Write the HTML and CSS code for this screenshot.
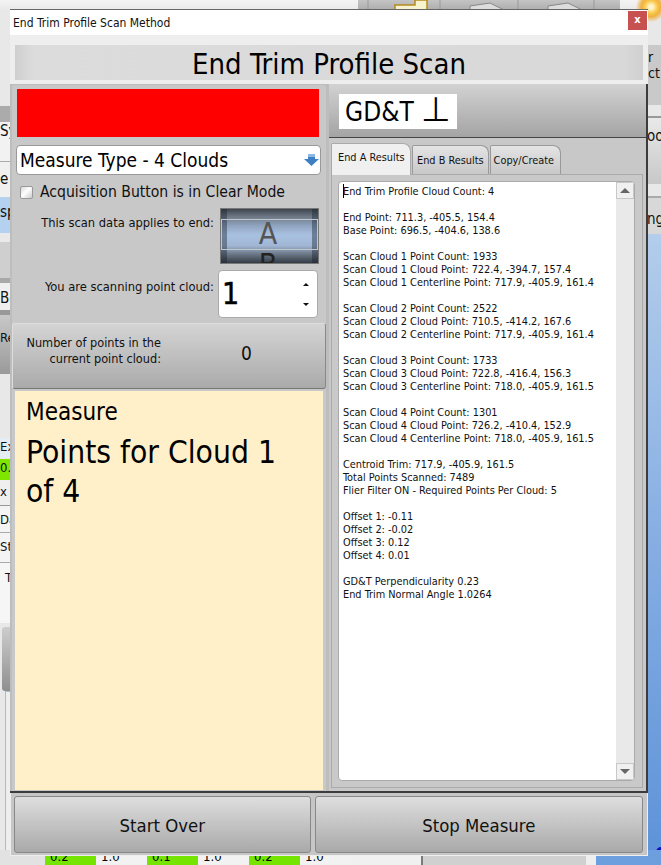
FILE: index.html
```html
<!DOCTYPE html>
<html lang="en">
<head>
<meta charset="utf-8">
<title>End Trim Profile Scan Method</title>
<link rel="stylesheet" href="styles.css">
</head>
<body>
<div class="desk">
  <div class="bg bg-top"></div>
  <div class="bg bg-toolbar"></div>
  <svg class="bg bg-icons" width="262" height="10" viewBox="0 0 262 10"><path d="M37 10V5h20V0h12v10z" fill="#f7f3cf" stroke="#b78a1c" stroke-width="1.5"/><path d="M112 10V6l20-3 14 7M190 10V6l20-3 14 7" fill="#ddd" stroke="#888"/><path d="M10 0v10M82 0v10M160 0v10M236 0v10" stroke="#999"/></svg>
  <div class="bg bg-star"></div>
  <div class="bg bg-blue"></div>
  <div class="bg bg-r1 frag"><span>r</span><span>ct</span></div>
  <div class="bg bg-r2 frag">oo</div>
  <div class="bg bg-r3 frag">ng</div>
  <svg class="bg bg-dots" width="6" height="18" viewBox="0 0 6 18"><circle cx="6" cy="5" r="5" fill="#1010c0"/><path d="M6 13v5H1z" fill="#e01010"/></svg>
  <div class="bg bg-l bl1"></div>
  <div class="bg bg-l bl2 frag">Sy</div>
  <div class="bg bg-l bl3 frag">e</div>
  <div class="bg bg-l bl4 frag">sp</div>
  <div class="bg bg-l bl5"></div>
  <div class="bg bg-l bl6 frag">Be</div>
  <div class="bg bg-l bl7 frag small">Re</div>
  <div class="bg bg-l bl8 frag small">Ext</div>
  <div class="bg bg-l bl9 frag small">0.</div>
  <div class="bg bg-l bl10 frag small">x</div>
  <div class="bg bg-l bl11 frag small">Da</div>
  <div class="bg bg-l bl12 frag small">St</div>
  <div class="bg bg-l bl13 frag small">T</div>
  <div class="bg bg-l bl14"></div>
  <div class="bg bg-l bl15"></div>
  <div class="bg bg-bottom">
    <span class="cell g">0.2</span><span class="cell">1.0</span>
    <span class="cell g">0.1</span><span class="cell">1.0</span>
    <span class="cell g">0.2</span><span class="cell">1.0</span>
    <span class="rest"></span>
  </div>

  <main class="window">
    <header class="titlebar">
      <span class="title-text">End Trim Profile Scan Method</span>
      <span class="close">x</span>
    </header>
    <div class="headband"><h1 class="heading">End Trim Profile Scan</h1></div>

    <div class="panels">
      <section class="left">
        <div class="status"></div>
        <div class="combo">
          <span>Measure Type - 4 Clouds</span>
          <svg class="combo-arrow" width="15" height="14" viewBox="0 0 15 14"><path d="M4 1h7v5h4l-7.500 7L0 6h4z" fill="#3f7fc4"/><path d="M4 1h7v3H4z" fill="#8fb8e4"/></svg>
        </div>
        <label class="check"><span class="box"></span><span>Acquisition Button is in Clear Mode</span></label>
        <div class="field drum-row">
          <span class="field-label">This scan data applies to end:</span>
          <div class="drum"><span class="drum-a">A</span><span class="drum-b">B</span><div class="drum-window"></div></div>
        </div>
        <div class="field spin-row">
          <span class="field-label">You are scanning point cloud:</span>
          <div class="spin"><span class="spin-val">1</span><span class="spin-arrows"><i class="up"></i><i class="down"></i></span></div>
        </div>
        <div class="points">
          <span class="points-label">Number of points in the<br>current point cloud:</span>
          <span class="points-val">0</span>
        </div>
        <div class="prompt">
          <div class="prompt-small">Measure</div>
          <div class="prompt-big">Points for Cloud 1<br>of 4</div>
        </div>
      </section>

      <section class="right">
        <div class="gdt-bar"><div class="gdt">GD&amp;T <span class="perp">⊥</span></div></div>
        <div class="tabarea">
          <div class="tabs">
            <span class="tab active">End A Results</span>
            <span class="tab">End B Results</span>
            <span class="tab tab-last">Copy/Create</span>
          </div>
          <div class="page">
            <div class="results">
              <div class="result-text"><span class="caret"></span>End Trim Profile Cloud Count: 4<br>
<br>
End Point: 711.3, -405.5, 154.4<br>
Base Point: 696.5, -404.6, 138.6<br>
<br>
Scan Cloud 1 Point Count: 1933<br>
Scan Cloud 1 Cloud Point: 722.4, -394.7, 157.4<br>
Scan Cloud 1 Centerline Point: 717.9, -405.9, 161.4<br>
<br>
Scan Cloud 2 Point Count: 2522<br>
Scan Cloud 2 Cloud Point: 710.5, -414.2, 167.6<br>
Scan Cloud 2 Centerline Point: 717.9, -405.9, 161.4<br>
<br>
Scan Cloud 3 Point Count: 1733<br>
Scan Cloud 3 Cloud Point: 722.8, -416.4, 156.3<br>
Scan Cloud 3 Centerline Point: 718.0, -405.9, 161.5<br>
<br>
Scan Cloud 4 Point Count: 1301<br>
Scan Cloud 4 Cloud Point: 726.2, -410.4, 152.9<br>
Scan Cloud 4 Centerline Point: 718.0, -405.9, 161.5<br>
<br>
Centroid Trim: 717.9, -405.9, 161.5<br>
Total Points Scanned: 7489<br>
Flier Filter ON - Required Points Per Cloud: 5<br>
<br>
Offset 1: -0.11<br>
Offset 2: -0.02<br>
Offset 3: 0.12<br>
Offset 4: 0.01<br>
<br>
GD&amp;T Perpendicularity 0.23<br>
End Trim Normal Angle 1.0264</div>
              <div class="scrollbar">
                <span class="sb-btn"><i class="sb-up"></i></span>
                <span class="sb-btn"><i class="sb-down"></i></span>
              </div>
            </div>
          </div>
        </div>
      </section>
    </div>

    <footer class="actions">
      <button class="btn btn-left">Start Over</button>
      <button class="btn btn-right">Stop Measure</button>
    </footer>
  </main>
</div>
</body>
</html>
```
FILE: styles.css
```css
* { box-sizing: border-box; }
html, body { margin: 0; padding: 0; }
body {
  width: 661px;
  height: 865px;
  overflow: hidden;
  font-family: "DejaVu Sans", "Liberation Sans", sans-serif;
  font-stretch: condensed;
  color: #000;
}
.desk { position: relative; width: 661px; height: 865px; overflow: hidden; background: #e8e8e8; }

/* desktop fragments behind the dialog */
.bg { position: absolute; }
.bg-top { left: 0; top: 0; width: 661px; height: 10px; background: linear-gradient(#f3f3f3, #e9e9e9); }
.bg-toolbar { left: 358px; top: 0; width: 262px; height: 10px; background: linear-gradient(#c4c4c4, #adadad); }
.bg-icons { left: 358px; top: 0; }
.bg-star { left: 636px; top: -8px; width: 30px; height: 30px; border-radius: 50%; background: radial-gradient(circle, #fff3c8 0 10%, #f9c84a 30%, #f0b040 45%, rgba(240,176,64,0) 72%); }
.bg-blue { left: 645px; top: 234px; width: 16px; height: 631px; background: linear-gradient(#b3cdeb, #85ade3 50%, #5d92d8); }
.frag { font-size: 15px; line-height: 18px; color: #111; overflow: hidden; }
.bg-r1 { left: 640px; top: 45px; width: 21px; height: 60px; background: #c9c9c9; display: flex; flex-direction: column; padding-left: 8px; font-size: 14px; line-height: 16px; padding-top: 4px; }
.bg-r2 { left: 640px; top: 116px; width: 21px; height: 68px; background: linear-gradient(#e9e9e9, #c8c8c8); border-top: 2px solid #999; padding: 9px 0 0 7px; }
.bg-r3 { left: 640px; top: 196px; width: 21px; height: 38px; background: #d8d8d8; border-top: 2px solid #aaa; padding: 12px 0 0 7px; }
.bg-dots { left: 655px; top: 847px; }
.bg-l { left: 0; width: 14px; }
.small { font-size: 13px; }
.bl1 { top: 106px; height: 16px; background: #ababab; }
.bl2 { top: 122px; height: 40px; background: #f2f2f2; border-bottom: 1px solid #aaa; }
.bl3 { top: 162px; height: 35px; background: #f0f0f0; padding-top: 8px; }
.bl4 { top: 197px; height: 36px; background: #b4d2ef; padding-top: 6px; }
.bl5 { top: 233px; height: 45px; background: #cfcfcf; border-top: 9px solid #e9e9e9; }
.bl6 { top: 278px; height: 32px; background: #efefef; border-top: 5px solid #a8a8a8; padding-top: 6px; }
.bl7 { top: 310px; height: 64px; background: linear-gradient(#c8c8c8, #9a9a9a); border-top: 5px solid #999; padding-top: 14px; }
.bl8 { top: 438px; height: 20px; background: #e4ecf4; }
.bl9 { top: 459px; height: 21px; background: #7fe600; }
.bl10 { top: 480px; height: 26px; background: #efefef; border-bottom: 1px solid #999; padding-top: 3px; }
.bl11 { top: 506px; height: 27px; background: #f4f4f4; border-bottom: 1px solid #aaa; padding-top: 5px; }
.bl12 { top: 533px; height: 30px; background: #f4f4f4; border-bottom: 1px solid #aaa; padding-top: 5px; }
.bl13 { top: 563px; height: 60px; background: #f6f6f6; padding: 6px 0 0 5px; }
.bl14 { top: 627px; height: 64px; background: linear-gradient(#cdcdcd, #8f8f8f); left: 2px; border-radius: 3px 0 0 3px; }
.bl15 { top: 691px; height: 174px; background: #eee; left: 5px; border-left: 1px solid #a8bdd2; border-top: 1px solid #a8bdd2; }
.bg-bottom { left: 0; top: 850px; width: 661px; height: 15px; background: #e2e2e2; display: flex; padding-left: 45px; font-size: 13px; line-height: 13px; overflow: hidden; }
.cell { width: 51px; padding-left: 5px; overflow: hidden; }
.cell.g { background: #74e400; }
.cell:nth-child(2n) { background: #f2f2f2; }
.rest {
  flex: 1;
  background: linear-gradient(90deg, #f0f0f0 0 70px, #7a7a7a 70px 72px, #d0d0d0 72px 235px, #eee 235px 245px, #6d9edd 245px);
}

/* dialog */
.window {
  position: absolute; left: 10px; top: 9px;
  width: 638px; height: 846px;
  background: #efefef;
  border-top: 1px solid #666;
  display: flex; flex-direction: column;
}
.titlebar {
  height: 25px; flex: none; background: #fff;
  display: flex; align-items: center; justify-content: space-between;
  padding: 0 1px 0 3px;
}
.title-text { font-size: 12px; color: #111; }
.close {
  width: 19px; height: 19px; margin-bottom: 4px; background: #c75050; color: #fff;
  font-size: 11px; font-weight: bold; line-height: 17px; text-align: center;
}
.headband { height: 49px; flex: none; padding: 10px 5px 4px; background: #eee; }
.heading {
  margin: 0; height: 35px;
  background: linear-gradient(90deg, #cfcfcf, #dcdcdc 3%, #d8d8d8 97%, #d0d0d0);
  font-size: 29px; font-weight: normal; line-height: 38px; text-align: center;
}
.panels { display: flex; flex: none; height: 709px; background: #bdbdbd; border-bottom: 2px solid #3c3c3c; }
.left {
  width: 316px; flex: none; margin-left: 1px; background: #c8c8c8;
  border: 1px solid #bdbdbd; border-bottom: 0; border-radius: 3px 3px 0 0;
  padding: 4px 0 0;
  display: flex; flex-direction: column;
}
.status { height: 48px; margin: 0 7px 0 5px; background: #f00; flex: none; }
.combo {
  height: 30px; flex: none; margin: 8px 5px 0 4px;
  background: #fff; border: 1px solid #999; border-radius: 4px;
  display: flex; align-items: center; justify-content: space-between;
  padding: 0 1px 0 3px;
  font-size: 19px;
}
.combo-arrow { flex: none; }
.check { display: flex; align-items: center; height: 18px; margin: 8px 0 0 8px; font-size: 15.600px; gap: 7px; color: #111; }
.box { width: 13px; height: 13px; flex: none; border: 1px solid #999; border-radius: 2px; background: linear-gradient(135deg, #d8d8d8, #fff 45%, #ccc); }
.field { display: flex; justify-content: flex-end; align-items: flex-start; flex: none; }
.field-label { font-size: 12.800px; color: #111; }
.drum-row { margin: 7px 7px 0 0; gap: 6px; height: 56px; }
.drum-row .field-label { padding-top: 7px; }
.drum {
  width: 99px; height: 56px; position: relative; overflow: hidden;
  border: 1px solid #777;
  background:
    linear-gradient(90deg, rgba(20,30,45,.4) 0 6px, transparent 6px 91px, rgba(20,30,45,.4) 91px),
    linear-gradient(#3d444d, #6d7785 14%, #8ea2bd 30%, #a9c1e1 48%, #a0b6d4 68%, #6a7684 84%, #333b45);
}
.drum-window { position: absolute; left: 0; right: 0; top: 10px; height: 31px; border: 1px solid #c0c6cc; }
.drum-a { position: absolute; left: 0; right: 3px; top: 10px; font-size: 30px; line-height: 30px; text-align: center; color: #555; }
.drum-b { position: absolute; left: 0; right: 3px; top: 41px; font-size: 30px; line-height: 30px; text-align: center; color: #222; }
.spin-row { margin: 6px 8px 0 0; gap: 4px; height: 48px; }
.spin-row .field-label { padding-top: 9px; }
.spin {
  width: 100px; height: 48px; background: #fff;
  border: 1px solid #aaa; border-radius: 4px;
  display: flex; align-items: center; justify-content: space-between;
  padding: 0 8px 0 3px;
}
.spin-val { font-size: 30px; line-height: 40px; -webkit-text-stroke: 0.5px #000; }
.spin-arrows { display: flex; flex-direction: column; gap: 17px; }
.spin-arrows i { display: block; width: 0; height: 0; border-left: 3px solid transparent; border-right: 3px solid transparent; }
.up { border-bottom: 3px solid #111; }
.down { border-top: 3px solid #111; }
.points {
  height: 66px; flex: none; margin: 5px 0 0 0; padding-bottom: 10px;
  background: linear-gradient(#d4d4d4, #aaa);
  border: 1px solid #ddd; border-bottom-color: #777; border-right-color: #888; border-radius: 3px;
  display: flex; align-items: center; font-size: 12.600px; color: #111;
}
.points-label { width: 148px; text-align: right; line-height: 16px; flex: none; }
.points-val { margin-left: 80px; font-size: 19px; padding-top: 4px; }
.prompt {
  margin: 2px 3px 1px 3px; flex: 1; background: #fff0c9; padding: 5px 11px;
}
.prompt-small { font-size: 24px; line-height: 32px; }
.prompt-big { font-size: 31.500px; line-height: 39px; margin-top: 5px; }

.right { width: 319px; flex: none; margin-left: 2px; display: flex; flex-direction: column; background: #c8c8c8; border-right: 2px solid #3c3c3c; }
.gdt-bar { height: 54px; flex: none; background: linear-gradient(#d2d2d2, #a4a4a4); border-bottom: 1px solid #444; padding: 10px 0 0 10px; }
.gdt { width: 118px; height: 35px; background: #fff; font-size: 26px; line-height: 36px; padding-left: 6px; white-space: nowrap; overflow: hidden; }
.perp { font-size: 34px; line-height: 30px; font-weight: 200; }
.tabarea { flex: 1; padding: 5px 3px 3px 2px; display: flex; flex-direction: column; min-height: 0; }
.tabs { display: flex; height: 31px; flex: none; gap: 1px; align-items: flex-end; }
.tab {
  font-size: 10.850px; height: 29px; line-height: 29px; padding: 0 4px;
  background: linear-gradient(#e4e4e4, #c8c8c8);
  border: 1px solid #999; border-bottom: 0; white-space: nowrap;
  border-radius: 2px 8px 0 0; color: #111;
}
.tab-last { padding-left: 3px; padding-right: 6px; }
.tab.active { height: 32px; background: #f0f0f0; padding: 0 0 0 6px; line-height: 28px; margin-bottom: -1px; position: relative; z-index: 1; border-color: #aaa; width: 80px; }
.page { flex: 1; border: 1px solid #aaa; padding: 6px 7px 6px 6px; min-height: 0; background: #c9c9c9; }
.results {
  height: 100%; background: #fff; border: 1px solid #aaa; border-radius: 4px;
  display: flex; justify-content: space-between; overflow: hidden;
}
.result-text { font-size: 10.850px; line-height: 13px; padding: 3px 0 0 4px; color: #111; white-space: nowrap; position: relative; }
.caret { position: absolute; left: 4px; top: 2px; width: 1px; height: 14px; background: #000; }
.scrollbar { width: 18px; flex: none; background: #e9e9e9; display: flex; flex-direction: column; justify-content: space-between; }
.sb-btn { height: 17px; background: #f0f0f0; border: 1px solid #c8c8c8; display: flex; align-items: center; justify-content: center; }
.sb-btn i { width: 0; height: 0; border-left: 5px solid transparent; border-right: 5px solid transparent; }
.sb-up { border-bottom: 5px solid #666; }
.sb-down { border-top: 5px solid #666; }

.actions { flex: 1; display: flex; gap: 4px; padding: 3px 4px 2px 3px; background: #c6c6c6; border: 1px solid #eee; border-top: 0; }
.btn {
  height: 57px; font: inherit; font-size: 18.400px; font-stretch: condensed; color: #111;
  background: linear-gradient(#dedede, #a9a9a9);
  border: 1px solid #888; border-radius: 3px;
  padding: 2px 0 0;
}
.btn-left { width: 297px; }
.btn-right { width: 329px; }
```
